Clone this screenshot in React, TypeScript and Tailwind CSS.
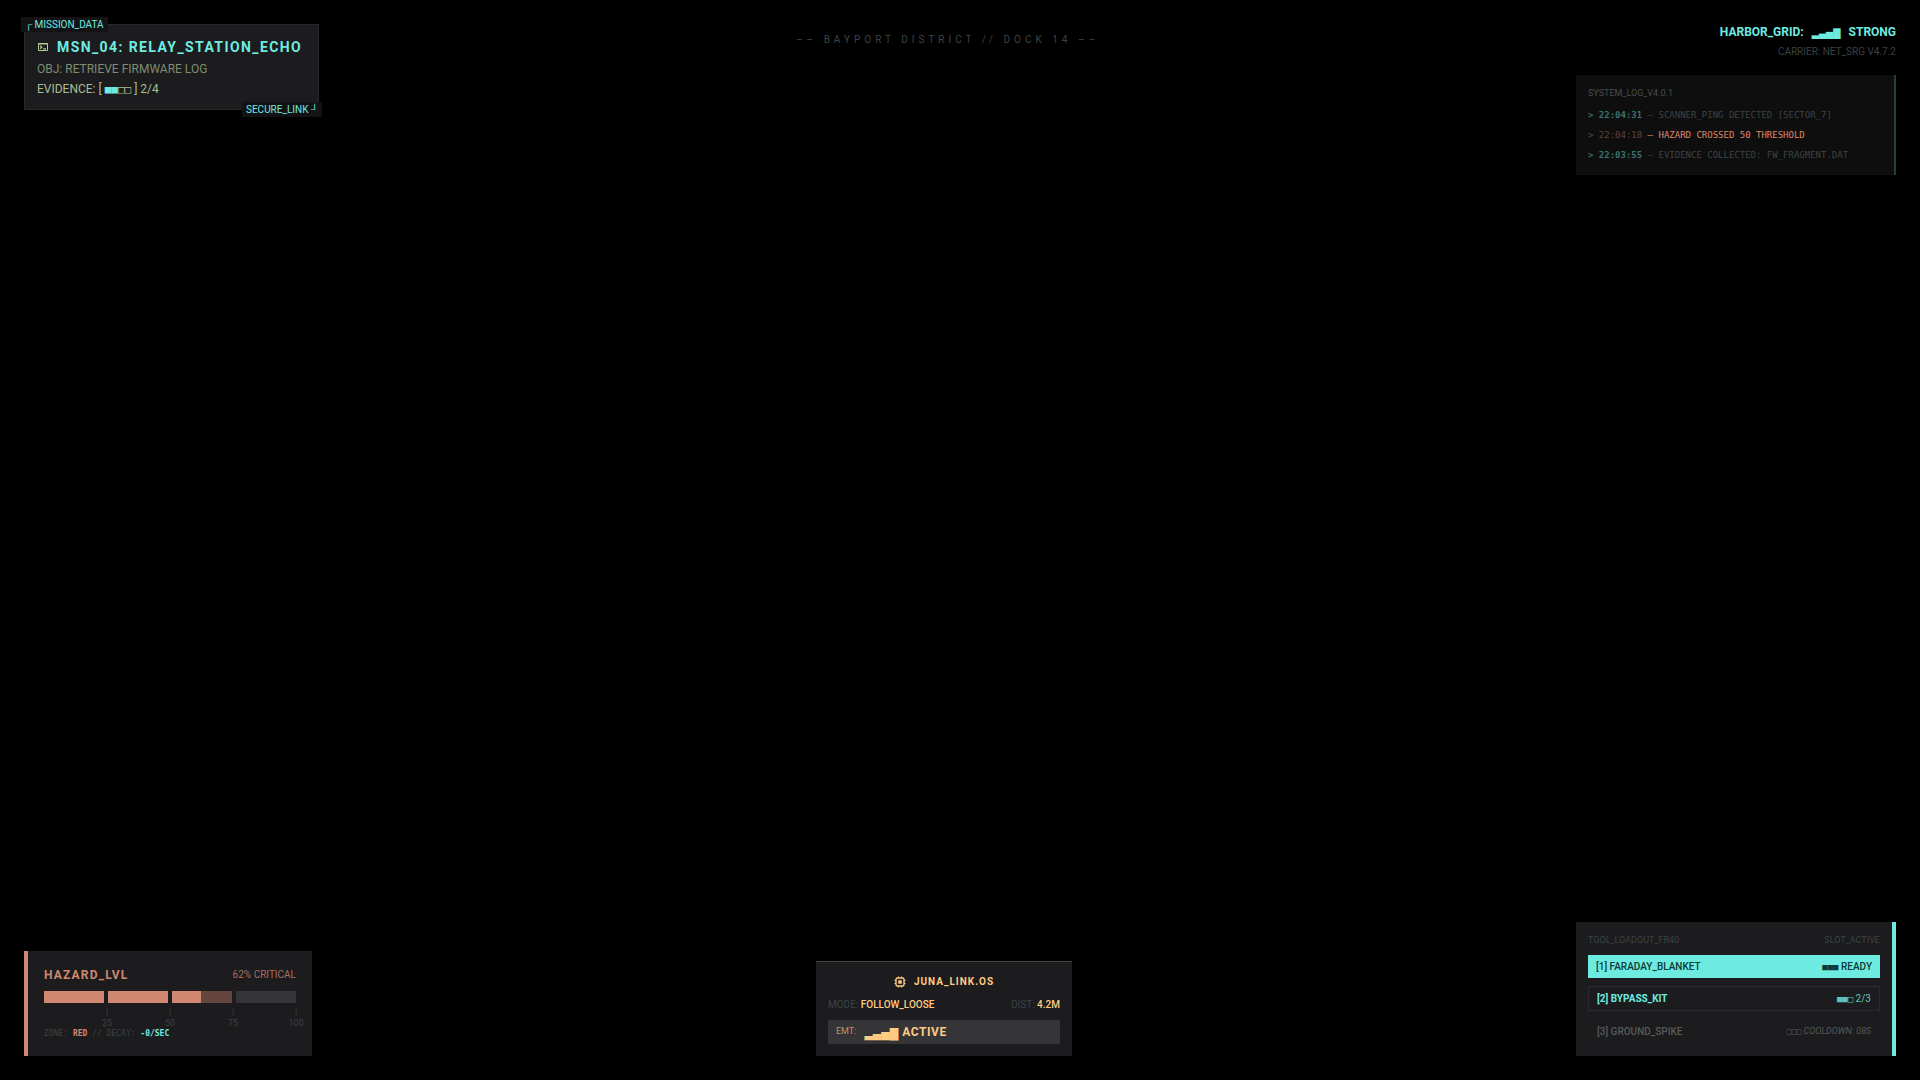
import type { ReactNode } from 'react'

const log = [
  { time: '22:04:31', text: 'SCANNER_PING DETECTED [SECTOR_7]', alert: false },
  { time: '22:04:18', text: 'HAZARD CROSSED 50 THRESHOLD', alert: true },
  { time: '22:03:55', text: 'EVIDENCE COLLECTED: FW_FRAGMENT.DAT', alert: false },
]

const segments = [100, 100, 48, 0]
const ticks = ['25', '50', '75', '100']

// Block glyphs come from a mono face so they stay compact
function Blocks({ className, children }: { className: string; children: ReactNode }) {
  return <span className={`font-['DejaVu_Sans_Mono',monospace] leading-none ${className}`}>{children}</span>
}

function TerminalIcon() {
  return (
    <svg className="size-3 text-[#b5cc9a]" viewBox="0 0 12 12" fill="none" stroke="currentColor">
      <path d="M1.5 2.5h9v7h-9z M1 3h10" />
      <path d="M3 4.6l1.8 1.6L3 7.8 M6 7.9h3" strokeWidth="1.2" />
    </svg>
  )
}

function ChipIcon() {
  return (
    <svg className="size-3" viewBox="0 0 12 12" fill="none" stroke="currentColor">
      <rect x="2" y="2" width="8" height="8" rx="1.5" strokeWidth="1.4" />
      <rect x="4.25" y="4.25" width="3.5" height="3.5" fill="currentColor" stroke="none" />
      <path d="M4.5 0.5v1.5 M7.5 0.5v1.5 M4.5 10v1.5 M7.5 10v1.5 M0.5 4.5h1.5 M0.5 7.5h1.5 M10 4.5h1.5 M10 7.5h1.5" />
    </svg>
  )
}

function MissionPanel() {
  return (
    <section className="relative border border-[#232828] bg-[#1c1b1d] py-3 pl-3 pr-4">
      <div className="absolute -left-1 -top-2 bg-[#131315] px-1 text-[10px] leading-[15px] text-[#6eebe1]">
        ┌ MISSION_DATA
      </div>
      <div className="flex items-center gap-2">
        <TerminalIcon />
        <h1 className="text-sm font-bold leading-5 tracking-widest text-[#6eebe1]">MSN_04: RELAY_STATION_ECHO</h1>
      </div>
      <p className="mt-1 text-xs leading-4 text-[#7e8d71]">OBJ: RETRIEVE FIRMWARE LOG</p>
      <p className="mt-1 text-xs leading-4 text-[#a9bd92]">
        EVIDENCE: [ <Blocks className="text-[11px]"><span className="text-[#6eebe1]">■■</span>□□</Blocks> ] 2/4
      </p>
      <div className="absolute -bottom-2 -right-1 bg-[#131315] px-1 text-[10px] leading-[15px] text-[#6eebe1]">
        SECURE_LINK ┘
      </div>
    </section>
  )
}

function NetworkPanel() {
  return (
    <section className="w-80">
      <div className="text-right">
        <div className="flex items-center justify-end gap-2 text-xs font-bold leading-4 text-[#6eebe1]">
          HARBOR_GRID: <Blocks className="text-[12px]">▂▃▄▆</Blocks> STRONG
        </div>
        <div className="mt-1 text-[10px] leading-[15px] text-[#3b4140]">CARRIER: NET_SRG V4.7.2</div>
      </div>
      <div className="mt-4 border-r-2 border-[#263f3e] bg-[#0e0e0f] p-3">
        <h2 className="text-[9px] leading-3 text-[#4a4d4d]">SYSTEM_LOG_V4.0.1</h2>
        <ul className="mt-2 space-y-1 font-['DejaVu_Sans_Mono',monospace] text-[9px] leading-4">
          {log.map(entry => (
            <li key={entry.time} className={entry.alert ? 'text-[#e08868]' : 'text-[#3b4444]'}>
              <span className={entry.alert ? 'text-[#60413a]' : 'font-bold text-[#3a716d]'}>&gt; {entry.time}</span>
              {' — '}
              {entry.text}
            </li>
          ))}
        </ul>
      </div>
    </section>
  )
}

function HazardPanel() {
  return (
    <section className="w-72 border-l-4 border-[#d08870] bg-[#1c1b1d] p-4">
      <div className="flex items-center justify-between">
        <h2 className="text-xs font-bold leading-4 tracking-widest text-[#d08870]">HAZARD_LVL</h2>
        <span className="text-[10px] leading-4 text-[#a87060]">62% CRITICAL</span>
      </div>
      <div className="mt-2 grid h-3 grid-cols-4 gap-1">
        {segments.map((fill, i) => (
          <div key={i} className={fill > 0 ? 'bg-[#64463f]' : 'bg-[#353437]'}>
            <div className="h-full bg-[#d08870]" style={{ width: `${fill}%` }} />
          </div>
        ))}
      </div>
      <div className="mt-1 grid grid-cols-4 text-center text-[9px] text-[#3b4444]">
        {ticks.map(tick => (
          <div key={tick} className="translate-x-1/2">
            <div className="leading-[11px]">|</div>
            <div className="leading-[10px]">{tick}</div>
          </div>
        ))}
      </div>
      <p className="font-['DejaVu_Sans_Mono',monospace] text-[8px] leading-3 text-[#3b4444]">
        ZONE: <b className="text-[#d08870]">RED</b> // DECAY: <b className="text-[#6eebe1]">-0/SEC</b>
      </p>
    </section>
  )
}

function LinkPanel() {
  return (
    <section className="w-64 border-t border-[#4b403c] bg-[#1c1b1d] p-3">
      <div className="flex items-center justify-center gap-2 text-[#ffcb83]">
        <ChipIcon />
        <h2 className="text-[10px] font-bold leading-4 tracking-widest">JUNA_LINK.OS</h2>
      </div>
      <div className="mt-2 flex justify-between text-[10px] leading-[14px] text-[#3b4444]">
        <span>MODE: <span className="font-medium text-[#ffcb83]">FOLLOW_LOOSE</span></span>
        <span>DIST: <span className="font-medium text-[#ffcb83]">4.2M</span></span>
      </div>
      <div className="mt-2 flex h-6 items-center bg-[#353437] px-2 text-[#ffcb83]">
        <span className="text-[9px] text-[#b8976c]">EMT:</span>
        <Blocks className="ml-2 text-[14px]">▂▃▄▆</Blocks>
        <span className="ml-1 text-xs font-bold tracking-wider">ACTIVE</span>
      </div>
    </section>
  )
}

function LoadoutPanel() {
  return (
    <section className="w-80 border-r-4 border-[#6eebe1] bg-[#1c1b1d] p-3">
      <div className="flex justify-between text-[9px] leading-[13px] text-[#3b4444]">
        <h2>TOOL_LOADOUT_FR40</h2>
        <span>SLOT_ACTIVE</span>
      </div>
      <div className="mt-2 space-y-2 text-[10px] leading-[15px]">
        <button className="flex w-full items-center justify-between bg-[#6eebe1] px-2 py-1 font-medium text-[#0c3a37]">
          <span>[1] FARADAY_BLANKET</span>
          <span><Blocks className="text-[9px]">■■■</Blocks> READY</span>
        </button>
        <button className="flex w-full items-center justify-between border border-[#2a2b2d] px-2 py-1 text-[#6eebe1]">
          <span className="font-bold">[2] BYPASS_KIT</span>
          <span className="text-[#5fc6bd]"><Blocks className="text-[9px]">■■□</Blocks> 2/3</span>
        </button>
        <button disabled className="flex w-full items-center justify-between border border-[#1e1d20] px-2 py-1 text-[#555b5a]">
          <span className="font-medium">[3] GROUND_SPIKE</span>
          <span className="text-[9px] italic"><Blocks className="text-[8px]">□□□</Blocks> COOLDOWN: 08S</span>
        </button>
      </div>
    </section>
  )
}

export default function App() {
  return (
    <main className="flex min-h-screen flex-col justify-between bg-black p-6 font-['Roboto',sans-serif]">
      <header className="flex items-start justify-between">
        <MissionPanel />
        <p className="pt-2 text-[10px] leading-4 tracking-[0.4em] text-[#3b4444]">–– BAYPORT DISTRICT // DOCK 14 ––</p>
        <NetworkPanel />
      </header>
      <footer className="flex items-end justify-between">
        <HazardPanel />
        <LinkPanel />
        <LoadoutPanel />
      </footer>
    </main>
  )
}
